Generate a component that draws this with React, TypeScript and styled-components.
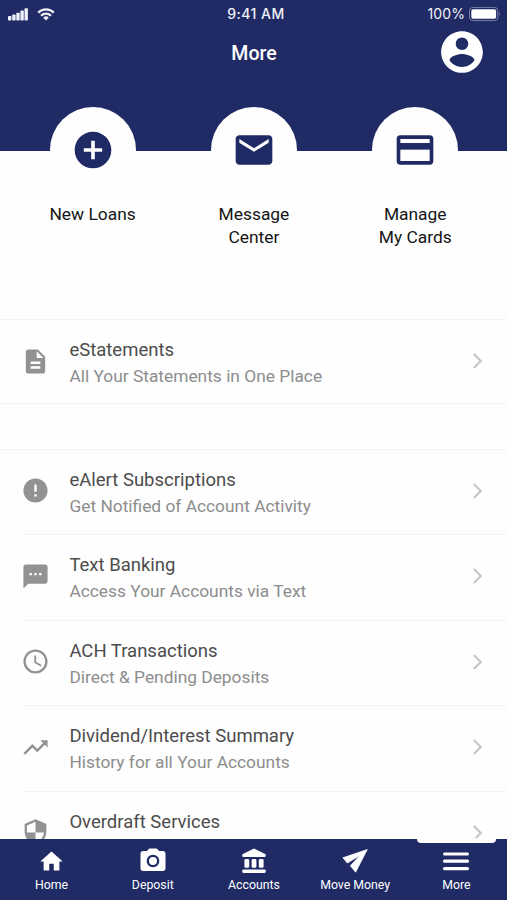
import React from 'react';
import styled, { createGlobalStyle } from 'styled-components';

const NAVY = '#202b66';

const Global = createGlobalStyle`
  * { box-sizing: border-box; }
  body { margin: 0; background: #fefefe; font-family: Roboto, sans-serif; }
  svg { display: block; }
`;

const Screen = styled.div`
  width: 507px;
  height: 900px;
  display: flex;
  flex-direction: column;
  overflow: hidden;
  background: #fefefe;
`;

const Header = styled.header`
  flex: none;
  height: 151px;
  background: ${NAVY};
  color: #fff;
`;

const StatusBar = styled.div`
  height: 27px;
  padding: 1px 6px 0 8px;
  display: grid;
  grid-template-columns: 1fr auto 1fr;
  align-items: center;
  font: 500 14px/26px Inter, sans-serif;
  color: #f0f1f8;
`;

const Signals = styled.div`
  display: flex;
  align-items: center;
  gap: 9px;
`;

const Clock = styled.span`
  padding-left: 3px;
  letter-spacing: 0.5px;
`;

const Battery = styled.div`
  display: flex;
  justify-content: flex-end;
  align-items: center;
  gap: 4px;
  font-weight: 400;
  letter-spacing: 0.1px;
  white-space: nowrap;
`;

const TitleBar = styled.div`
  height: 50px;
  padding: 0 21px 0 24px;
  display: grid;
  grid-template-columns: 1fr auto 1fr;
  align-items: center;
`;

const Title = styled.h1`
  grid-column: 2;
  margin: 4px 0 0 -2px;
  font-size: 19.5px;
  line-height: 46px;
  font-weight: 500;
`;

const ProfileButton = styled.button`
  justify-self: end;
  border: 0;
  padding: 0;
  background: none;
  color: #fff;
  margin-right: -1px;
`;

const Shortcuts = styled.section`
  flex: none;
  height: 168px;
  margin-top: -44px;
  margin-bottom: 44px;
  padding: 0 12px;
  display: grid;
  grid-template-columns: repeat(3, 161.3px);
`;

const Shortcut = styled.div`
  display: flex;
  flex-direction: column;
  align-items: center;
  z-index: 1;
`;

const Disc = styled.div`
  width: 86px;
  height: 86px;
  border-radius: 50%;
  background: #fefefe;
  color: ${NAVY};
  display: grid;
  place-items: center;
`;

const ShortcutLabel = styled.div`
  margin-top: 10px;
  width: 100px;
  text-align: center;
  font-size: 17.4px;
  line-height: 22.5px;
  color: #151515;
`;

const List = styled.ul<{ $gap: number }>`
  flex: none;
  list-style: none;
  margin: ${p => p.$gap}px 0 0;
  padding: 0;
  border-top: 1px solid #f4f4f4;
`;

const Row = styled.li<{ $height: number }>`
  height: ${p => p.$height}px;
  display: grid;
  grid-template-columns: 69.4px 1fr 41.6px;
`;

const RowIcon = styled.div`
  padding: 26.5px 0 0 20.5px;
  color: #929292;
`;

const RowText = styled.div`
  padding-top: 17px;
`;

const RowTitle = styled.div`
  font-size: 18.5px;
  line-height: 26px;
  color: #4c4c4c;
`;

const RowSubtitle = styled.div`
  font-size: 17.35px;
  line-height: 26px;
  color: #8d8d8d;
`;

const RowChevron = styled.div`
  padding: 32px 0 0 6.4px;
  color: #c4c4c4;
`;

const Divider = styled.hr<{ $inset?: boolean }>`
  height: 1px;
  border: 0;
  margin: -1px 0 0 ${p => (p.$inset ? 24 : 0)}px;
  background: #f4f4f4;
`;

const Content = styled.main`
  flex: 1;
  min-height: 0;
  overflow: hidden;
  display: flex;
  flex-direction: column;
`;

const TabBar = styled.nav`
  flex: none;
  height: 61px;
  padding-left: 1px;
  display: grid;
  grid-template-columns: repeat(5, 101.2px);
  background: ${NAVY};
  color: #fff;
`;

const Tab = styled.div`
  position: relative;
  display: flex;
  flex-direction: column;
  align-items: center;
`;

const TabIcon = styled.div`
  height: 37px;
  padding-top: 7px;
  display: grid;
  place-items: center;
`;

const TabLabel = styled.span`
  font-size: 12.3px;
  line-height: 18px;
  white-space: nowrap;
`;

const ActiveMarker = styled.span`
  position: absolute;
  top: -1px;
  left: 11px;
  width: 79px;
  height: 5px;
  background: #fefefe;
  border-radius: 0 0 4px 4px;
`;

const Glyph = ({ d, size }: { d: string; size: number }) => (
  <svg width={size} height={size} viewBox="0 0 24 24" fill="currentColor"><path d={d} /></svg>
);

const icons = {
  account: 'M12 2C6.48 2 2 6.48 2 12s4.48 10 10 10 10-4.48 10-10S17.52 2 12 2zm0 3c1.66 0 3 1.34 3 3s-1.34 3-3 3-3-1.34-3-3 1.34-3 3-3zm0 14.2c-2.5 0-4.71-1.28-6-3.22.03-1.99 4-3.08 6-3.08 1.99 0 5.97 1.09 6 3.08-1.29 1.94-3.5 3.22-6 3.22z',
  add: 'M12 2C6.48 2 2 6.48 2 12s4.48 10 10 10 10-4.48 10-10S17.52 2 12 2zm5 11h-4v4h-2v-4H7v-2h4V7h2v4h4v2z',
  mail: 'M20 4H4c-1.1 0-1.99.9-1.99 2L2 18c0 1.1.9 2 2 2h16c1.1 0 2-.9 2-2V6c0-1.1-.9-2-2-2zm0 4l-8 5-8-5V6l8 5 8-5v2z',
  document: 'M14 2H6c-1.1 0-1.99.9-1.99 2L4 20c0 1.1.89 2 1.99 2H18c1.1 0 2-.9 2-2V8l-6-6zm2 16H8v-2h8v2zm0-4H8v-2h8v2zm-3-5V3.5L18.5 9H13z',
  alert: 'M12 2C6.48 2 2 6.48 2 12s4.48 10 10 10 10-4.48 10-10S17.52 2 12 2zm1 15h-2v-2h2v2zm0-4h-2V7h2v6z',
  sms: 'M20 2H4c-1.1 0-1.99.9-1.99 2L2 22l4-4h14c1.1 0 2-.9 2-2V4c0-1.1-.9-2-2-2zM9 11H7V9h2v2zm4 0h-2V9h2v2zm4 0h-2V9h2v2z',
  clock: 'M11.99 2C6.47 2 2 6.48 2 12s4.47 10 9.99 10C17.52 22 22 17.52 22 12S17.52 2 11.99 2zM12 20c-4.42 0-8-3.58-8-8s3.58-8 8-8 8 3.58 8 8-3.58 8-8 8zm.5-13H11v6l5.25 3.15.75-1.23-4.5-2.67z',
  trend: 'M16 6l2.29 2.29-4.88 4.88-4-4L2 16.59 3.41 18l6-6 4 4 6.3-6.29L22 12V6z',
  shield: 'M12 1L3 5v6c0 5.55 3.84 10.74 9 12 5.16-1.26 9-6.45 9-12V5l-9-4zm0 10.99h7c-.53 4.12-3.28 7.79-7 8.94V12H5V6.3l7-3.11v8.8z',
  home: 'M10 20v-6h4v6h5v-8h3L12 3 2 12h3v8z',
  camera: 'M9 2L7.17 4H4c-1.1 0-2 .9-2 2v12c0 1.1.9 2 2 2h16c1.1 0 2-.9 2-2V6c0-1.1-.9-2-2-2h-3.17L15 2H9zm3 15c-2.76 0-5-2.24-5-5s2.24-5 5-5 5 2.24 5 5-2.24 5-5 5zm0-1.8a3.2 3.2 0 1 0 0-6.4 3.2 3.2 0 0 0 0 6.4z',
};

const CardIcon = () => (
  <svg width="44" height="44" viewBox="0 0 24 24">
    <rect x="3" y="5" width="18" height="14" rx="1" fill="none" stroke="currentColor" strokeWidth="2" />
    <rect x="3" y="8.2" width="18" height="3.6" fill="currentColor" />
  </svg>
);

const BankIcon = () => (
  <svg width="26" height="26" viewBox="0 0 26 26" fill="currentColor">
    <path d="M13 0.5L24.6 6.3Q25 9 24 9H2Q1 9 1.4 6.3Z" />
    <rect x="3.4" y="11" width="4.8" height="8.8" rx="1.4" />
    <rect x="10.6" y="11" width="4.8" height="8.8" rx="1.4" />
    <rect x="17.8" y="11" width="4.8" height="8.8" rx="1.4" />
    <rect x="1.2" y="21.6" width="23.6" height="3.4" rx="1.4" />
  </svg>
);

const PlaneIcon = () => (
  <svg width="26" height="24" viewBox="0 0 26 24" fill="currentColor" stroke="currentColor" strokeWidth="0.8" strokeLinejoin="round">
    <path d="M25.2 0.6L0.9 8.8L5.4 14L18 6.2L8.4 16.8L13.6 23.2Z" />
  </svg>
);

const MenuIcon = () => (
  <svg width="26" height="20" viewBox="0 0 26 20" fill="currentColor">
    <rect x="0" y="1.4" width="26" height="3.2" rx="1.5" />
    <rect x="0" y="8.6" width="26" height="3.2" rx="1.5" />
    <rect x="0" y="16" width="26" height="3.2" rx="1.5" />
  </svg>
);

const CellularIcon = () => (
  <svg width="20" height="13" viewBox="0 0 20 13" fill="currentColor">
    <rect x="0" y="8" width="3.4" height="4.6" rx="0.8" />
    <rect x="4.2" y="6.4" width="3.4" height="6.2" rx="0.8" />
    <rect x="8.3" y="4.8" width="3.4" height="7.8" rx="0.8" />
    <rect x="12.4" y="2.6" width="3.4" height="10" rx="0.8" />
    <rect x="16.5" y="0.3" width="3.4" height="12.3" rx="0.8" />
  </svg>
);

const WifiIcon = () => (
  <svg width="18" height="13" viewBox="0 0 18 13" fill="none" stroke="currentColor" strokeWidth="2.2">
    <path d="M1.2 4.6a11 11 0 0 1 15.6 0" />
    <path d="M4 7.8a7 7 0 0 1 10 0" />
    <path d="M6.2 9.7a4 4 0 0 1 5.6 0L9 12.6Z" fill="currentColor" stroke="none" />
  </svg>
);

const BatteryIcon = () => (
  <svg width="32" height="15" viewBox="0 0 32 15">
    <rect x="0.5" y="0.4" width="28.4" height="13.2" rx="3.5" fill="none" stroke="#7a81a8" />
    <rect x="2.3" y="2.2" width="24.8" height="9.6" rx="1.8" fill="#fff" />
    <path d="M30.2 4.8q1.4 2.2 0 4.4z" fill="#8a90b3" />
  </svg>
);

const ChevronIcon = () => (
  <svg width="12" height="18" viewBox="0 0 12 18" fill="none" stroke="currentColor" strokeWidth="2">
    <path d="M1.8 2L8.8 9L1.8 16" />
  </svg>
);

type Item = { icon: string; title: string; subtitle: string };

const statements: Item[] = [
  { icon: icons.document, title: 'eStatements', subtitle: 'All Your Statements in One Place' },
];

const services: Item[] = [
  { icon: icons.alert, title: 'eAlert Subscriptions', subtitle: 'Get Notified of Account Activity' },
  { icon: icons.sms, title: 'Text Banking', subtitle: 'Access Your Accounts via Text' },
  { icon: icons.clock, title: 'ACH Transactions', subtitle: 'Direct & Pending Deposits' },
  { icon: icons.trend, title: 'Dividend/Interest Summary', subtitle: 'History for all Your Accounts' },
  { icon: icons.shield, title: 'Overdraft Services', subtitle: '' },
];

const ItemList = ({ items, gap, rowHeight }: { items: Item[]; gap: number; rowHeight: number }) => (
  <List $gap={gap}>
    {items.map((item, i) => (
      <React.Fragment key={item.title}>
        {i > 0 && <Divider $inset />}
        <Row $height={rowHeight}>
          <RowIcon><Glyph d={item.icon} size={29} /></RowIcon>
          <RowText>
            <RowTitle>{item.title}</RowTitle>
            <RowSubtitle>{item.subtitle}</RowSubtitle>
          </RowText>
          <RowChevron><ChevronIcon /></RowChevron>
        </Row>
      </React.Fragment>
    ))}
    {items.length === 1 && <Divider />}
  </List>
);

const shortcuts = [
  { icon: <Glyph d={icons.add} size={44} />, lines: ['New Loans'] },
  { icon: <Glyph d={icons.mail} size={44} />, lines: ['Message', 'Center'] },
  { icon: <CardIcon />, lines: ['Manage', 'My Cards'] },
];

const tabs = [
  { label: 'Home', icon: <Glyph d={icons.home} size={27} /> },
  { label: 'Deposit', icon: <Glyph d={icons.camera} size={30} /> },
  { label: 'Accounts', icon: <BankIcon /> },
  { label: 'Move Money', icon: <PlaneIcon /> },
  { label: 'More', icon: <MenuIcon />, active: true },
];

export default function App() {
  return (
    <Screen>
      <Global />
      <Header>
        <StatusBar>
          <Signals><CellularIcon /><WifiIcon /></Signals>
          <Clock>9:41 AM</Clock>
          <Battery>100%<BatteryIcon /></Battery>
        </StatusBar>
        <TitleBar>
          <Title>More</Title>
          <ProfileButton aria-label="Profile"><Glyph d={icons.account} size={50} /></ProfileButton>
        </TitleBar>
      </Header>
      <Shortcuts>
        {shortcuts.map(s => (
          <Shortcut key={s.lines[0]}>
            <Disc>{s.icon}</Disc>
            <ShortcutLabel>{s.lines.map(l => <div key={l}>{l}</div>)}</ShortcutLabel>
          </Shortcut>
        ))}
      </Shortcuts>
      <Content>
        <ItemList items={statements} gap={0} rowHeight={84} />
        <ItemList items={services} gap={44.6} rowHeight={85.5} />
      </Content>
      <TabBar>
        {tabs.map(t => (
          <Tab key={t.label}>
            {t.active && <ActiveMarker />}
            <TabIcon>{t.icon}</TabIcon>
            <TabLabel>{t.label}</TabLabel>
          </Tab>
        ))}
      </TabBar>
    </Screen>
  );
}
